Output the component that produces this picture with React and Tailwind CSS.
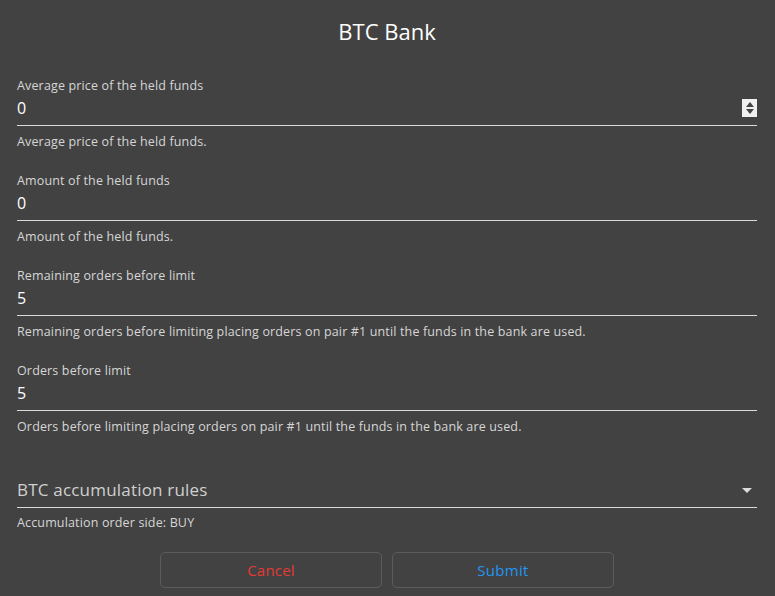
import React from 'react';

const FIELDS = [
  {
    label: 'Average price of the held funds',
    value: '0',
    help: 'Average price of the held funds.',
    spinner: true,
  },
  { label: 'Amount of the held funds', value: '0', help: 'Amount of the held funds.' },
  {
    label: 'Remaining orders before limit',
    value: '5',
    help: 'Remaining orders before limiting placing orders on pair #1 until the funds in the bank are used.',
  },
  {
    label: 'Orders before limit',
    value: '5',
    help: 'Orders before limiting placing orders on pair #1 until the funds in the bank are used.',
  },
];

function Spinner() {
  return (
    <div className="w-[15px] h-[18px] bg-[#f0f0f0] flex flex-col items-center justify-center gap-[2px]">
      <svg width="8" height="5" viewBox="0 0 8 5">
        <path d="M4 0L8 5H0z" fill="#444" />
      </svg>
      <svg width="8" height="5" viewBox="0 0 8 5">
        <path d="M0 0h8L4 5z" fill="#444" />
      </svg>
    </div>
  );
}

function Field({ label, value, help, spinner }) {
  return (
    <div className="mb-[23px]">
      <div className="h-[16px] pt-[1px] text-[12.5px] tracking-[0.15px] leading-[16px] text-[#d6d6d6]">{label}</div>
      <div className="pt-[5px] pb-[7px] border-b border-[#d9d9d9] flex items-center justify-between">
        <span className="text-[16px] leading-[20px] text-white">{value}</span>
        {spinner && <Spinner />}
      </div>
      <div className="mt-[8px] h-[15px] text-[12.5px] tracking-[0.15px] leading-[16px] text-[#d6d6d6]">{help}</div>
    </div>
  );
}

export default function App() {
  return (
    <div
      className="w-[775px] h-[596px] bg-[#424242] pl-[17px] pr-[18px] overflow-hidden"
      style={{ fontFamily: '"Open Sans", sans-serif' }}
    >
      <h2 className="pt-[17px] text-center text-[22px] leading-[28px] text-white">BTC Bank</h2>

      <div className="mt-[32px]">
        {FIELDS.map((f) => (
          <Field key={f.label} {...f} />
        ))}
      </div>

      {/* select */}
      <div className="mt-[44px] pb-[5px] border-b border-[#d9d9d9] flex items-center justify-between">
        <span className="text-[17px] tracking-[0.2px] leading-[24px] text-[#d0d0d0]">BTC accumulation rules</span>
        <svg width="10" height="5" viewBox="0 0 10 5" className="mr-[5px]">
          <path d="M0 0h10L5 5z" fill="#dcdcdc" />
        </svg>
      </div>
      <div className="mt-[7px] text-[12.5px] tracking-[0.15px] leading-[16px] text-[#d6d6d6]">
        Accumulation order side: BUY
      </div>

      <div className="mt-[21px] ml-[143px] flex gap-[10px]">
        <button className="w-[222px] h-[36px] rounded-[5px] border border-[#5c5c5c] text-[15px] tracking-[0.2px] text-[#e53935]">
          Cancel
        </button>
        <button className="w-[222px] h-[36px] rounded-[5px] border border-[#5c5c5c] text-[15px] tracking-[0.3px] text-[#2196f3]">
          Submit
        </button>
      </div>
    </div>
  );
}
